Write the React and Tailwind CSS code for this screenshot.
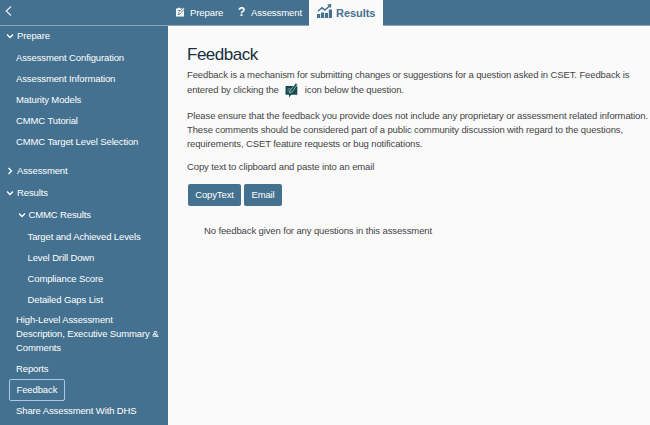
import React from "react";

const Chevron = ({ d }) => (
  <svg viewBox="0 0 8 8" className="w-2 h-2 mr-[3px] shrink-0" fill="none" stroke="#fff" strokeWidth="1.3">
    <path d={d} />
  </svg>
);
const DOWN = "M1 2.5 4 5.5 7 2.5";
const RIGHT = "M2.5 1 5.5 4 2.5 7";

const Item = ({ children, className = "pl-4" }) => (
  <div className={`h-[20.8px] flex items-center ${className}`}>{children}</div>
);

export default function App() {
  return (
    <div className="w-[650px] h-[425px] overflow-hidden flex flex-col bg-[#fafafa] font-['Liberation_Sans',Arial,sans-serif] text-[9.5px] tracking-[-0.12px] leading-[14px] whitespace-nowrap">
      <header className="h-[26px] shrink-0 flex bg-[#44718f] text-white">
        <div className="w-[168px] h-[26px] border-b border-[#8aa7ba] pl-[5px] pt-[6px]">
          <svg viewBox="0 0 7 10" className="w-[7px] h-[10px]" fill="none" stroke="#e6eef3" strokeWidth="1.2">
            <path d="M6 .5 1.2 5 6 9.5" />
          </svg>
        </div>
        <div className="w-[65px] flex items-center pl-2 pb-px border-b border-[#8aa7ba]">
          <svg viewBox="0 0 9 10" className="w-[9px] h-[10px] mr-[5px] -mt-px">
            <path d="M0 1.5H2.2V.7H4V1.5H8V9.5H0Z" fill="#fff" />
            <path d="M2 7.7 2.6 5.7 7.5.6 8.7 1.8 4 6.9ZM1.5 3.5H4" fill="#fff" stroke="#44718f" strokeWidth=".8" />
          </svg>
          <span className="mt-px text-[9.6px]">Prepare</span>
        </div>
        <div className="w-[76px] flex items-center pl-[5px] pb-px border-b border-[#8aa7ba]">
          <span className="w-[13px] text-[12px] font-bold">?</span>
          <span className="mt-px text-[9.6px]">Assessment</span>
        </div>
        <div className="w-[74px] flex items-center bg-[#fafafa] text-[#44718f] pl-[7px]">
          <svg viewBox="0 0 15 14" className="w-[15px] h-[14px] ml-px mr-1 -mt-[5px]" fill="#44718f">
            <path d="M0 10H3.2V14H0ZM4 8.5H7.2V14H4ZM8 9H11V14H8ZM11.8 5.5H15V14H11.8Z" />
            <path d="M1 7.2 5 3.8 8 6 12.5 2" fill="none" stroke="#44718f" strokeWidth="1.5" />
            <path d="M10.2.6 14.4 0 13.7 4.2Z" />
          </svg>
          <span className="text-[11px] tracking-[-0.05px] font-bold">Results</span>
        </div>
        <div className="flex-1 border-b border-[#8aa7ba]" />
      </header>
      <div className="flex flex-1 min-h-0">
        <nav className="w-[168px] shrink-0 bg-[#44718f] text-white">
          <Item className="pl-1.5">
            <Chevron d={DOWN} />
            Prepare
          </Item>
          <div className="pt-[1.3px]">
            <Item>Assessment Configuration</Item>
            <Item>Assessment Information</Item>
            <Item>Maturity Models</Item>
            <Item>CMMC Tutorial</Item>
            <Item>CMMC Target Level Selection</Item>
          </div>
          <Item className="pl-1.5 mt-[9px]">
            <Chevron d={RIGHT} />
            Assessment
          </Item>
          <Item className="pl-1.5 mt-px">
            <Chevron d={DOWN} />
            Results
          </Item>
          <Item className="pl-[17.5px] mt-px">
            <Chevron d={DOWN} />
            CMMC Results
          </Item>
          <div className="pt-[1.3px]">
            <Item className="pl-[27.5px]">Target and Achieved Levels</Item>
            <Item className="pl-[27.5px]">Level Drill Down</Item>
            <Item className="pl-[27.5px]">Compliance Score</Item>
            <Item className="pl-[27.5px]">Detailed Gaps List</Item>
          </div>
          <div className="pl-4 pt-[3.2px] pb-[3px]">
            High-Level Assessment
            <br />
            Description, Executive Summary &amp;
            <br />
            Comments
          </div>
          <Item>Reports</Item>
          <div className="ml-[9px] w-14 h-[22px] border border-[#a9c8ea] rounded-[2px] flex items-center pl-[6.5px]">
            Feedback
          </div>
          <Item>Share Assessment With DHS</Item>
        </nav>
        <main className="pl-[19px] pt-[19px] text-[#444]">
          <h1 className="text-[17px] tracking-[-0.5px] leading-5 text-[#17303f]">Feedback</h1>
          <p className="mt-[3px]">Feedback is a mechanism for submitting changes or suggestions for a question asked in CSET. Feedback is</p>
          <p className="h-4 flex items-center">
            entered by clicking the
            <svg viewBox="0 0 13 15" className="w-[13px] h-[15px] mx-[6.5px]">
              <path d="M.5 3H12.3V11.8H6.2L4 14.5V11.8H.5Z" fill="#174c50" />
              <path d="M2.5 6H6M2.5 8H5" stroke="#94b5b2" strokeWidth=".7" />
              <path d="M4.5 10 5.2 7.7 10.7.3 12.5 1.5 7 9Z" fill="#174c50" stroke="#dce8e6" strokeWidth=".6" />
            </svg>
            icon below the question.
          </p>
          <p className="mt-[11px]">
            Please ensure that the feedback you provide does not include any proprietary or assessment related information.
            <br />
            These comments should be considered part of a public community discussion with regard to the questions,
            <br />
            requirements, CSET feature requests or bug notifications.
          </p>
          <p className="mt-[9px]">Copy text to clipboard and paste into an email</p>
          <div className="mt-[10px] ml-[1px] flex gap-[3px] text-white">
            <button className="w-[53px] h-[22px] rounded-[2px] bg-[#44718f]">CopyText</button>
            <button className="w-[38px] h-[22px] rounded-[2px] bg-[#44718f]">Email</button>
          </div>
          <p className="mt-[18px] ml-[17px]">No feedback given for any questions in this assessment</p>
        </main>
      </div>
    </div>
  );
}
